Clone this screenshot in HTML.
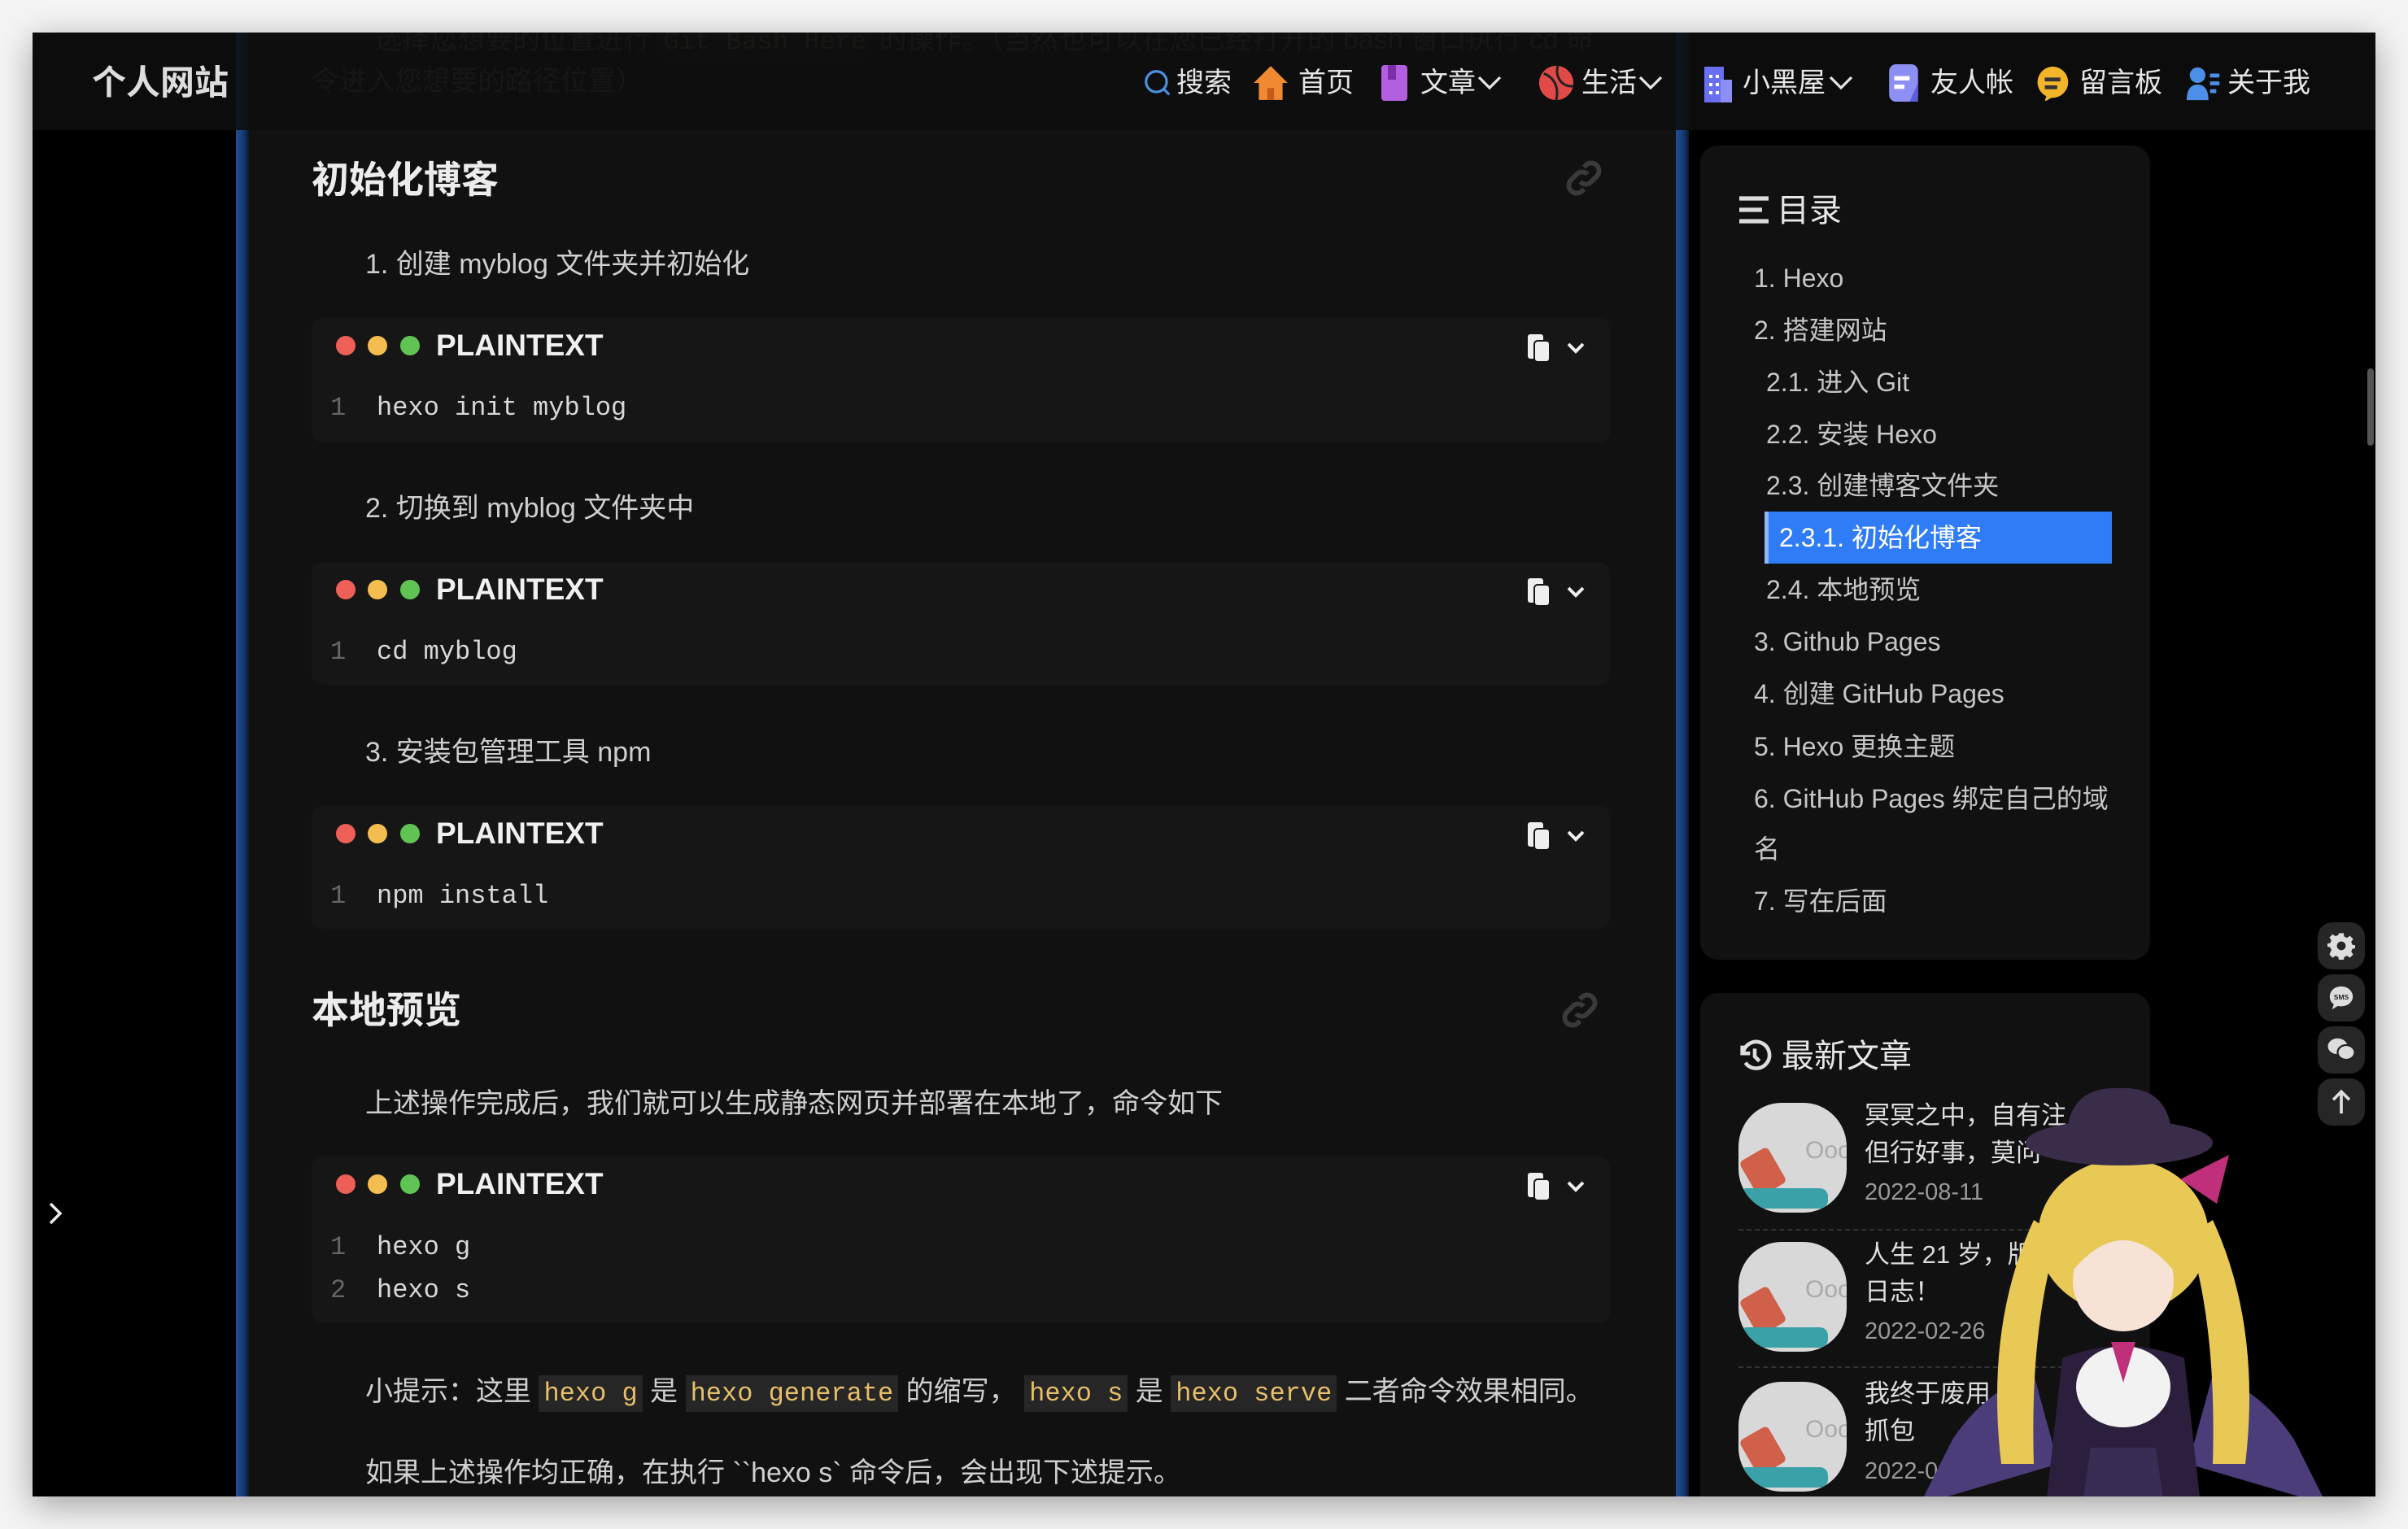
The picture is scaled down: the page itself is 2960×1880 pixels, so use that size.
<!DOCTYPE html>
<html><head><meta charset="utf-8"><style>
*{margin:0;padding:0;box-sizing:border-box}
body{width:2960px;height:1880px;background:#f4f4f4;position:relative;overflow:hidden;font-family:"Liberation Sans","Noto Sans CJK SC",sans-serif;color:#cfcfcf}
#win{position:absolute;left:40px;top:40px;width:2880px;height:1800px;background:#000;overflow:hidden;box-shadow:0 10px 40px rgba(0,0,0,.35)}
.a{position:absolute;white-space:nowrap}
.main{position:absolute;left:264px;top:0;width:1756px;height:1800px;background:#111}
.bl{position:absolute;top:0;height:1800px;width:16px;background:linear-gradient(90deg,#1f4f99,#15386f 60%,#0a1a33)}
.cb{position:absolute;left:343px;width:1596px;background:#161616;border-radius:14px}
.dot{position:absolute;top:22px;width:24px;height:24px;border-radius:50%}
.pt{position:absolute;left:153px;top:12px;line-height:44px;font-size:37px;font-weight:bold;color:#f0f0f0}
.ln{position:absolute;left:23px;line-height:40px;font-family:"Liberation Mono",monospace;font-size:32px;color:#666}
.cd{position:absolute;left:80px;line-height:40px;font-family:"Liberation Mono",monospace;font-size:32px;color:#d8d8d8}
.p{font-size:34px;line-height:50px;color:#cfcfcf}
.h{font-size:46px;line-height:60px;font-weight:bold;color:#ececec}
code{font-family:"Liberation Mono",monospace;color:#e7bf6a;background:#262626;padding:4px 6px;font-size:32px}
.nav{font-size:34px;line-height:44px;color:#e6e6e6;top:40px}
.toc{font-size:32px;line-height:40px;color:#c6c6c6}
.card{position:absolute;background:#111;border-radius:22px}
.fb{position:absolute;left:2809px;width:58px;height:58px;border-radius:18px;background:#262626}
.th{position:absolute;left:2097px;width:133px;height:135px;border-radius:40%;background:#d8d8d8;overflow:hidden}
</style></head><body>
<div id="win">
 <div class="main"></div>
 <div class="bl" style="left:250px"></div>
 <div class="bl" style="left:2020px"></div>

 <div class="a p" style="left:420px;top:-16px;color:#555">选择您想要的位置进行 <code style="background:#1c1c1c;color:#6a5a35">Git Bash Here</code> 的操作。（当然也可以在您已经打开的 bash 窗口执行 cd 命</div>
 <div class="a p" style="left:343px;top:35px;color:#555">令进入您想要的路径位置）</div>

 <div class="a h" style="left:343px;top:151px">初始化博客</div>
 <svg class="a" style="left:1880px;top:152px" width="54" height="54" viewBox="0 0 24 24" fill="none" stroke="#3a3a3a" stroke-width="2.6"><path d="M10 14a4 4 0 0 0 6 0l3-3a4 4 0 0 0-6-6l-1 1M14 10a4 4 0 0 0-6 0l-3 3a4 4 0 0 0 6 6l1-1"/></svg>
 <div class="a p" style="left:409px;top:260px">1. 创建 myblog 文件夹并初始化</div>

 <div class="cb" style="top:351px;height:153px"><i class="dot" style="left:30px;background:#ee5f57"></i><i class="dot" style="left:69px;background:#f4bd4f"></i><i class="dot" style="left:109px;background:#5fc454"></i><div class="pt">PLAINTEXT</div>
 <div class="ln" style="top:91px">1</div><div class="cd" style="top:91px">hexo init myblog</div></div>

 <div class="a p" style="left:409px;top:560px">2. 切换到 myblog 文件夹中</div>
 <div class="cb" style="top:651px;height:151px"><i class="dot" style="left:30px;background:#ee5f57"></i><i class="dot" style="left:69px;background:#f4bd4f"></i><i class="dot" style="left:109px;background:#5fc454"></i><div class="pt">PLAINTEXT</div>
 <div class="ln" style="top:91px">1</div><div class="cd" style="top:91px">cd myblog</div></div>

 <div class="a p" style="left:409px;top:860px">3. 安装包管理工具 npm</div>
 <div class="cb" style="top:951px;height:151px"><i class="dot" style="left:30px;background:#ee5f57"></i><i class="dot" style="left:69px;background:#f4bd4f"></i><i class="dot" style="left:109px;background:#5fc454"></i><div class="pt">PLAINTEXT</div>
 <div class="ln" style="top:91px">1</div><div class="cd" style="top:91px">npm install</div></div>

 <div class="a h" style="left:343px;top:1172px">本地预览</div>
 <svg class="a" style="left:1875px;top:1175px" width="54" height="54" viewBox="0 0 24 24" fill="none" stroke="#3a3a3a" stroke-width="2.6"><path d="M10 14a4 4 0 0 0 6 0l3-3a4 4 0 0 0-6-6l-1 1M14 10a4 4 0 0 0-6 0l-3 3a4 4 0 0 0 6 6l1-1"/></svg>
 <div class="a p" style="left:409px;top:1292px">上述操作完成后，我们就可以生成静态网页并部署在本地了，命令如下</div>
 <div class="cb" style="top:1382px;height:205px"><i class="dot" style="left:30px;background:#ee5f57"></i><i class="dot" style="left:69px;background:#f4bd4f"></i><i class="dot" style="left:109px;background:#5fc454"></i><div class="pt">PLAINTEXT</div>
 <div class="ln" style="top:92px">1</div><div class="cd" style="top:92px">hexo g</div>
 <div class="ln" style="top:145px">2</div><div class="cd" style="top:145px">hexo s</div></div>

 <div class="a p" style="left:409px;top:1646px">小提示：这里 <code>hexo g</code> 是 <code>hexo generate</code> 的缩写， <code>hexo s</code> 是 <code>hexo serve</code> 二者命令效果相同。</div>
 <div class="a p" style="left:409px;top:1746px">如果上述操作均正确，在执行 ``hexo s` 命令后，会出现下述提示。</div>

 <svg class="a" style="left:1830px;top:361px" width="90" height="56" viewBox="0 0 90 56"><g fill="#eee"><rect x="8" y="10" width="19" height="30" rx="3"/><rect x="16" y="18" width="19" height="26" rx="4" stroke="#161616" stroke-width="2"/></g><path d="M58 22l9 9 9-9" stroke="#eee" stroke-width="4" fill="none"/></svg>
 <svg class="a" style="left:1830px;top:661px" width="90" height="56" viewBox="0 0 90 56"><g fill="#eee"><rect x="8" y="10" width="19" height="30" rx="3"/><rect x="16" y="18" width="19" height="26" rx="4" stroke="#161616" stroke-width="2"/></g><path d="M58 22l9 9 9-9" stroke="#eee" stroke-width="4" fill="none"/></svg>
 <svg class="a" style="left:1830px;top:961px" width="90" height="56" viewBox="0 0 90 56"><g fill="#eee"><rect x="8" y="10" width="19" height="30" rx="3"/><rect x="16" y="18" width="19" height="26" rx="4" stroke="#161616" stroke-width="2"/></g><path d="M58 22l9 9 9-9" stroke="#eee" stroke-width="4" fill="none"/></svg>
 <svg class="a" style="left:1830px;top:1392px" width="90" height="56" viewBox="0 0 90 56"><g fill="#eee"><rect x="8" y="10" width="19" height="30" rx="3"/><rect x="16" y="18" width="19" height="26" rx="4" stroke="#161616" stroke-width="2"/></g><path d="M58 22l9 9 9-9" stroke="#eee" stroke-width="4" fill="none"/></svg>

 <!-- header -->
 <div class="a" style="left:0;top:0;width:2880px;height:120px;background:rgba(14,14,14,.88)"></div>
 <div class="a" style="left:73px;top:34px;font-size:42px;line-height:56px;font-weight:bold;color:#ddd">个人网站</div>
 <svg class="a" style="left:1364px;top:42px" width="38" height="40" viewBox="0 0 24 24" fill="none" stroke="#4a90e2" stroke-width="2"><circle cx="11" cy="11" r="8"/><path d="M17 17l4 4"/></svg>
 <div class="a nav" style="left:1406px">搜索</div>
 <svg class="a" style="left:1497px;top:36px" width="50" height="52" viewBox="0 0 24 24"><path d="M12 2L2 12h3v10h14V12h3z" fill="#f08a32"/><rect x="10" y="15" width="4" height="7" fill="#c55a1a"/></svg>
 <div class="a nav" style="left:1556px">首页</div>
 <svg class="a" style="left:1656px;top:38px" width="36" height="48" viewBox="0 0 18 24"><rect x="1" y="1" width="16" height="22" rx="2" fill="#b45fe0"/><rect x="5" y="1" width="5" height="9" fill="#7a2ea8"/></svg>
 <div class="a nav" style="left:1706px">文章</div>
 <svg class="a" style="left:1774px;top:50px" width="34" height="24" viewBox="0 0 34 24"><path d="M4 5l13 13 13-13" stroke="#e6e6e6" stroke-width="3.2" fill="none"/></svg>
 <svg class="a" style="left:1850px;top:39px" width="46" height="46" viewBox="0 0 24 24"><circle cx="12" cy="12" r="11" fill="#e24a4a"/><path d="M4 6c6 2 10 8 8 17M13 1c-2 6 2 14 10 13" stroke="#222" stroke-width="1.6" fill="none"/></svg>
 <div class="a nav" style="left:1904px">生活</div>
 <svg class="a" style="left:1972px;top:50px" width="34" height="24" viewBox="0 0 34 24"><path d="M4 5l13 13 13-13" stroke="#e6e6e6" stroke-width="3.2" fill="none"/></svg>
 <svg class="a" style="left:2050px;top:38px" width="42" height="48" viewBox="0 0 20 24"><rect x="2" y="2" width="12" height="22" fill="#6a6ff0"/><rect x="12" y="10" width="7" height="14" fill="#8b8ff7"/><g fill="#fff"><rect x="5" y="7" width="2" height="2"/><rect x="9" y="7" width="2" height="2"/><rect x="5" y="12" width="2" height="2"/><rect x="9" y="12" width="2" height="2"/><rect x="5" y="17" width="2" height="2"/><rect x="9" y="17" width="2" height="2"/></g></svg>
 <div class="a nav" style="left:2102px">小黑屋</div>
 <svg class="a" style="left:2206px;top:50px" width="34" height="24" viewBox="0 0 34 24"><path d="M4 5l13 13 13-13" stroke="#e6e6e6" stroke-width="3.2" fill="none"/></svg>
 <svg class="a" style="left:2278px;top:36px" width="46" height="52" viewBox="0 0 22 24"><rect x="2" y="1" width="17" height="22" rx="4" fill="#8d8ff5"/><rect x="5" y="8" width="9" height="2.5" fill="#fff"/><rect x="5" y="13" width="6" height="2.5" fill="#fff"/><path d="M19 12l-5 11h5z" fill="#5b5fd8"/></svg>
 <div class="a nav" style="left:2333px">友人帐</div>
 <svg class="a" style="left:2462px;top:40px" width="46" height="46" viewBox="0 0 24 24"><path d="M11 1a10 10 0 0 1 0 20c-2 0-3 2-5 2l1-3A10 10 0 0 1 11 1z" fill="#f2b52a"/><rect x="6" y="8" width="10" height="2.5" fill="#333"/><rect x="6" y="13" width="8" height="2.5" fill="#333"/></svg>
 <div class="a nav" style="left:2516px">留言板</div>
 <svg class="a" style="left:2646px;top:38px" width="46" height="48" viewBox="0 0 24 24"><circle cx="8" cy="7" r="5" fill="#4d8fe8"/><path d="M1 23c0-7 3-10 7-10s7 3 7 10z" fill="#4d8fe8"/><rect x="16" y="6" width="6" height="2.5" fill="#4d8fe8"/><rect x="16" y="11" width="6" height="2.5" fill="#4d8fe8"/><rect x="16" y="16" width="4" height="2.5" fill="#4d8fe8"/></svg>
 <div class="a nav" style="left:2698px">关于我</div>

 <svg class="a" style="left:14px;top:1432px" width="30" height="40" viewBox="0 0 30 40"><path d="M8 8l12 12-12 12" stroke="#eee" stroke-width="3.5" fill="none"/></svg>

 <!-- TOC -->
 <div class="card" style="left:2050px;top:139px;width:553px;height:1001px"></div>
 <svg class="a" style="left:2094px;top:198px" width="44" height="40" viewBox="0 0 22 20"><path d="M2 3h18M2 10h14M2 17h18" stroke="#ddd" stroke-width="2.6"/></svg>
 <div class="a" style="left:2144px;top:191px;font-size:40px;line-height:56px;color:#e6e6e6">目录</div>
 <div class="a" style="left:2129px;top:589px;width:427px;height:64px;background:#2f7cf6;border-left:5px solid #8fb6f5"></div>
 <div class="a toc" style="left:2116px;top:282px">1. Hexo</div>
 <div class="a toc" style="left:2116px;top:346px">2. 搭建网站</div>
 <div class="a toc" style="left:2131px;top:410px">2.1. 进入 Git</div>
 <div class="a toc" style="left:2131px;top:474px">2.2. 安装 Hexo</div>
 <div class="a toc" style="left:2131px;top:537px">2.3. 创建博客文件夹</div>
 <div class="a toc" style="left:2147px;top:601px;color:#fff">2.3.1. 初始化博客</div>
 <div class="a toc" style="left:2131px;top:665px">2.4. 本地预览</div>
 <div class="a toc" style="left:2116px;top:729px">3. Github Pages</div>
 <div class="a toc" style="left:2116px;top:793px">4. 创建 GitHub Pages</div>
 <div class="a toc" style="left:2116px;top:858px">5. Hexo 更换主题</div>
 <div class="a toc" style="left:2116px;top:922px">6. GitHub Pages 绑定自己的域</div>
 <div class="a toc" style="left:2116px;top:984px">名</div>
 <div class="a toc" style="left:2116px;top:1048px">7. 写在后面</div>

 <!-- latest -->
 <div class="card" style="left:2050px;top:1181px;width:553px;height:700px"></div>
 <svg class="a" style="left:2094px;top:1236px" width="46" height="46" viewBox="0 0 24 24" fill="none" stroke="#ddd" stroke-width="2.4"><path d="M4 5v5h5"/><path d="M4.5 10A8.5 8.5 0 1 1 6 16"/><path d="M12 7v5l3 3"/></svg>
 <div class="a" style="left:2150px;top:1231px;font-size:40px;line-height:56px;color:#e6e6e6">最新文章</div>
 <div class="th" style="top:1316px"><i class="a" style="left:10px;top:60px;width:40px;height:50px;background:#d0604a;transform:rotate(-30deg);border-radius:6px"></i><i class="a" style="left:0;top:105px;width:110px;height:25px;background:#3aa1a8;border-radius:10px"></i><span class="a" style="left:82px;top:42px;font-size:30px;color:#aaa">Ooo</span></div>
 <div class="th" style="top:1487px"><i class="a" style="left:10px;top:60px;width:40px;height:50px;background:#d0604a;transform:rotate(-30deg);border-radius:6px"></i><i class="a" style="left:0;top:105px;width:110px;height:25px;background:#3aa1a8;border-radius:10px"></i><span class="a" style="left:82px;top:42px;font-size:30px;color:#aaa">Ooo</span></div>
 <div class="th" style="top:1659px"><i class="a" style="left:10px;top:60px;width:40px;height:50px;background:#d0604a;transform:rotate(-30deg);border-radius:6px"></i><i class="a" style="left:0;top:105px;width:110px;height:25px;background:#3aa1a8;border-radius:10px"></i><span class="a" style="left:82px;top:42px;font-size:30px;color:#aaa">Ooo</span></div>
 <div class="a" style="left:2097px;top:1471px;width:500px;border-top:2px dashed #333"></div>
 <div class="a" style="left:2097px;top:1640px;width:500px;border-top:2px dashed #333"></div>
 <div class="a" style="left:2252px;top:1309px;font-size:31px;color:#ddd;line-height:46px">冥冥之中，自有注<br>但行好事，莫问</div>
 <div class="a" style="left:2252px;top:1406px;font-size:29px;line-height:40px;color:#999">2022-08-11</div>
 <div class="a" style="left:2252px;top:1480px;font-size:31px;color:#ddd;line-height:46px">人生 21 岁，版本<br>日志！</div>
 <div class="a" style="left:2252px;top:1577px;font-size:29px;line-height:40px;color:#999">2022-02-26</div>
 <div class="a" style="left:2252px;top:1651px;font-size:31px;color:#ddd;line-height:46px">我终于废用<br>抓包</div>
 <div class="a" style="left:2252px;top:1749px;font-size:29px;line-height:40px;color:#999">2022-01-20</div>

 <svg class="a" style="left:2290px;top:1290px" width="560" height="520" viewBox="0 0 560 520">
  <path d="M30 520 L70 440 Q110 380 170 360 L200 470 Z" fill="#4a3d7a"/>
  <path d="M530 520 L490 440 Q450 380 390 360 L360 470 Z" fill="#4a3d7a"/>
  <path d="M170 170 Q110 300 130 470 L170 470 Q165 300 200 190 Z" fill="#e9c956"/>
  <path d="M390 170 Q450 300 430 470 L390 470 Q395 300 360 190 Z" fill="#e9c956"/>
  <ellipse cx="280" cy="190" rx="105" ry="95" fill="#e9c956"/>
  <ellipse cx="280" cy="245" rx="62" ry="62" fill="#f7e2d6"/>
  <path d="M220 230 Q280 160 340 230 L340 200 Q280 130 220 200 Z" fill="#e9c956"/>
  <path d="M205 340 Q280 310 355 340 L375 520 L185 520 Z" fill="#2c1f3d"/>
  <ellipse cx="280" cy="375" rx="58" ry="50" fill="#f2f2f2"/>
  <path d="M265 320 L295 320 L280 370 Z" fill="#c0307a"/>
  <path d="M240 450 L320 450 L330 520 L230 520 Z" fill="#3a2d55"/>
  <ellipse cx="275" cy="75" rx="115" ry="28" fill="#3a2d4a"/>
  <path d="M210 75 Q210 5 275 8 Q340 5 340 75 Z" fill="#3a2d4a"/>
  <path d="M350 120 L410 90 L395 150 Z" fill="#c0307a"/>
 </svg>

 <div class="fb" style="top:1094px"></div>
 <div class="fb" style="top:1158px"></div>
 <div class="fb" style="top:1222px"></div>
 <div class="fb" style="top:1286px"></div>
 <svg class="a" style="left:2821px;top:1106px" width="34" height="34" viewBox="0 0 24 24"><path d="M10 1h4l.6 3 2.4 1 2.5-1.7 2.8 2.8L20.6 8.6l1 2.4 3 .6v0 2.4l-3 .6-1 2.4 1.7 2.5-2.8 2.8-2.5-1.7-2.4 1-.6 3h-4l-.6-3-2.4-1-2.5 1.7-2.8-2.8L3.4 15.6l-1-2.4-3-.6v-2.4l3-.6 1-2.4L1.7 4.7 4.5 1.9 7 3.6l2.4-1z" fill="#ddd"/><circle cx="12" cy="12" r="3.8" fill="#262626"/></svg>
 <svg class="a" style="left:2821px;top:1170px" width="34" height="34" viewBox="0 0 24 24"><path d="M12 2C6 2 2 6 2 11c0 3 1.5 5 3.5 6.5L4 22l5-3c1 .2 2 .3 3 .3 6 0 10-4 10-8.5S18 2 12 2z" fill="#ddd"/><text x="12" y="13.5" font-size="6" font-weight="bold" text-anchor="middle" fill="#262626" font-family="Liberation Sans">SMS</text></svg>
 <svg class="a" style="left:2820px;top:1234px" width="36" height="34" viewBox="0 0 24 22"><ellipse cx="9" cy="8" rx="8" ry="6.5" fill="#ddd"/><ellipse cx="16" cy="13" rx="7" ry="6" fill="#ddd" stroke="#262626" stroke-width="1.5"/></svg>
 <svg class="a" style="left:2823px;top:1298px" width="30" height="34" viewBox="0 0 20 24"><path d="M10 22V3M3 10l7-7 7 7" stroke="#ddd" stroke-width="2.6" fill="none"/></svg>

 <div class="a" style="left:2870px;top:413px;width:8px;height:95px;border-radius:4px;background:#555"></div>
</div>
</body></html>
